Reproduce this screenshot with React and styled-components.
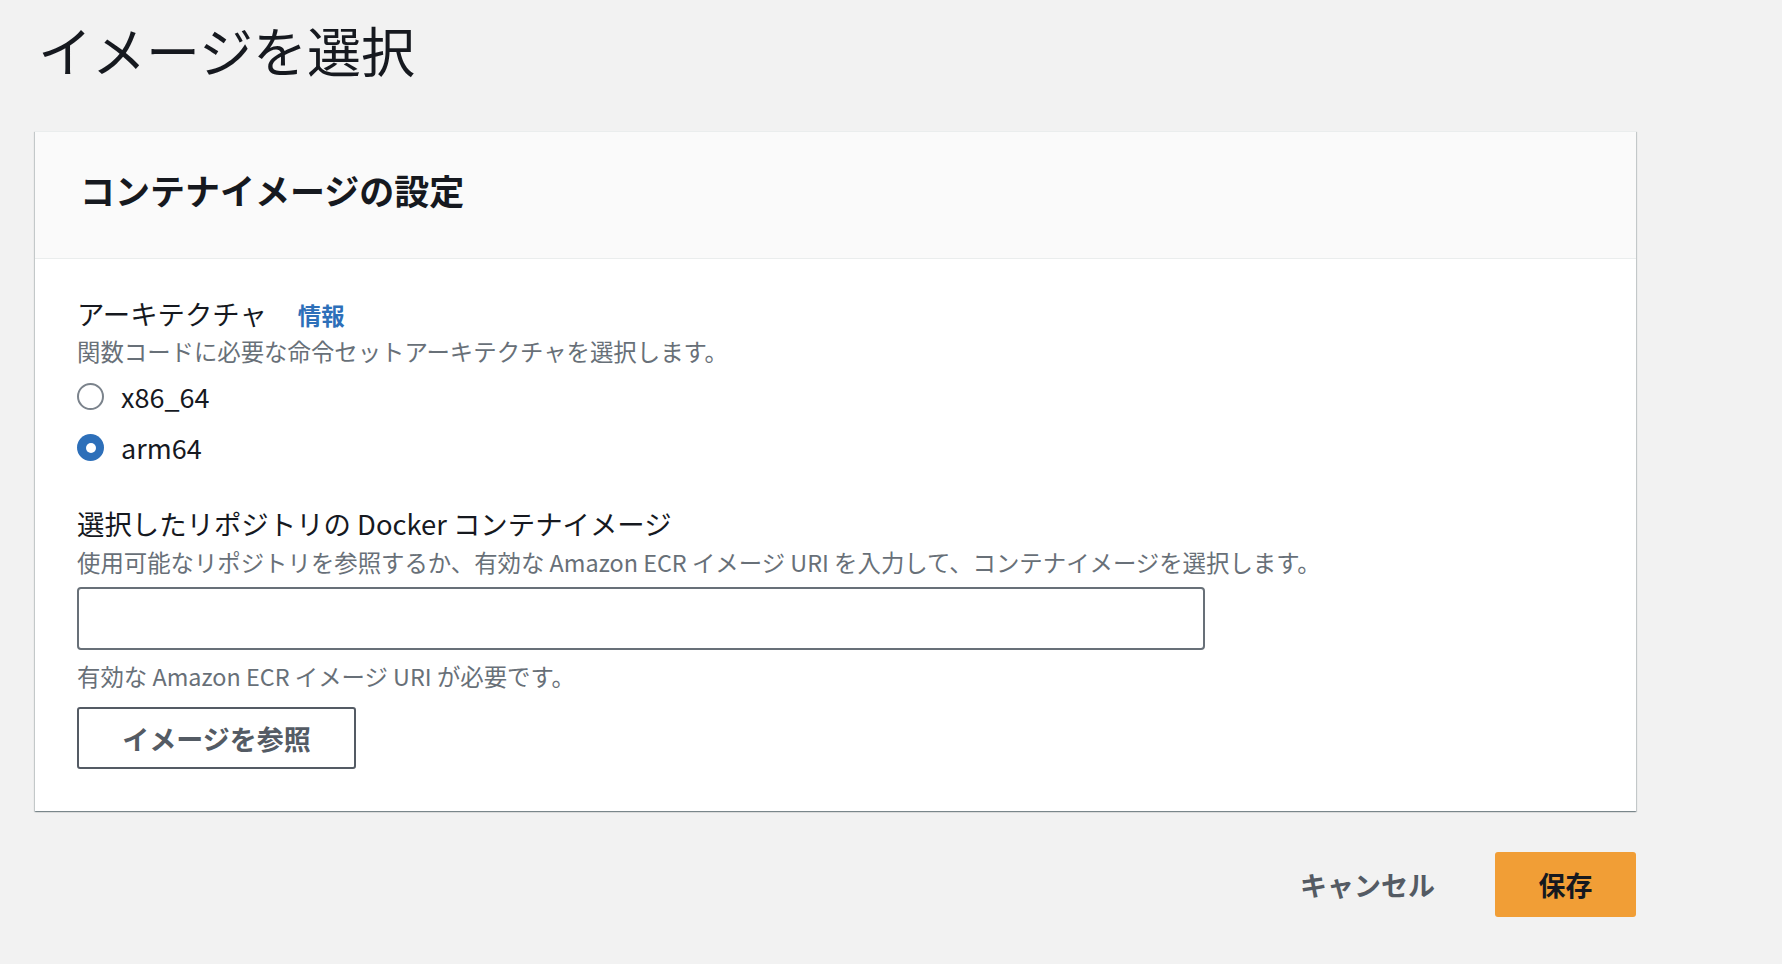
import React from "react";
import styled, { createGlobalStyle } from "styled-components";

const GlobalStyle = createGlobalStyle`
  html, body {
    margin: 0;
    padding: 0;
    background: #f2f2f2;
  }
  body {
    font-family: "Noto Sans CJK JP", "Noto Sans", "Liberation Sans", sans-serif;
    color: #16191f;
    min-height: 100vh;
  }
  * { box-sizing: border-box; }
`;

const Page = styled.div`
  width: 1601px;
  margin-left: 35px;
  padding-bottom: 40px;
`;

const Title = styled.h1`
  margin: 18px 0 49px 3px;
  font-size: 54px;
  line-height: 64px;
  font-weight: 400;
  color: #16191f;
`;

const Card = styled.section`
  background: #ffffff;
  border-top: 1px solid #eaeded;
  box-shadow: 0 1px 1px 0 rgba(0, 28, 36, 0.3), 1px 1px 1px 0 rgba(0, 28, 36, 0.15),
    -1px 1px 1px 0 rgba(0, 28, 36, 0.15);
`;

const CardHeader = styled.header`
  background: #fafafa;
  border-bottom: 1px solid #eaeded;
  padding: 38px 42px 48px;
`;

const CardTitle = styled.h2`
  margin: 0 0 0 3px;
  font-size: 35px;
  line-height: 40px;
  font-weight: 700;
  color: #16191f;
`;

const CardBody = styled.div`
  padding: 34px 42px 42px;
  display: flex;
  flex-direction: column;
  align-items: flex-start;
`;

const Field = styled.div`
  display: flex;
  flex-direction: column;
  align-items: flex-start;
  margin-top: ${(p) => p.$gap || 0}px;
`;

const LabelRow = styled.div`
  display: flex;
  align-items: baseline;
  gap: 31px;
  margin-bottom: 2px;
`;

const Label = styled.label`
  font-size: 27.4px;
  line-height: 40px;
  font-weight: 400;
  color: #16191f;
  margin-bottom: ${(p) => p.$mb || 0}px;
`;

const InfoLink = styled.a`
  font-size: 23.4px;
  font-weight: 700;
  color: #2d6fb9;
  text-decoration: none;
  cursor: pointer;
`;

const Description = styled.div`
  font-size: 23.4px;
  line-height: 32px;
  color: #687078;
`;

const RadioGroup = styled.div`
  display: flex;
  flex-direction: column;
  margin-top: 4px;
`;

const RadioRow = styled.label`
  display: flex;
  align-items: center;
  gap: 17px;
  height: 51px;
  cursor: pointer;
`;

const RadioCircle = styled.span`
  width: 27px;
  height: 27px;
  border-radius: 50%;
  display: flex;
  align-items: center;
  justify-content: center;
  border: ${(p) => (p.$checked ? "none" : "2px solid #7b838c")};
  background: ${(p) => (p.$checked ? "#2d6fb9" : "#ffffff")};
  &::after {
    content: "";
    display: ${(p) => (p.$checked ? "block" : "none")};
    width: 10px;
    height: 10px;
    border-radius: 50%;
    background: #ffffff;
  }
`;

const RadioText = styled.span`
  font-size: 27px;
  line-height: 40px;
  color: #16191f;
`;

const TextInput = styled.input`
  margin-top: 9px;
  width: 1128px;
  height: 63px;
  border: 2px solid #687078;
  border-radius: 4px;
  background: #ffffff;
  padding: 0 18px;
  font-family: inherit;
  font-size: 27px;
  color: #16191f;
  outline: none;
`;

const Constraint = styled(Description)`
  margin-top: 10px;
`;

const SecondaryButton = styled.button`
  margin-top: 15px;
  width: 279px;
  height: 62px;
  border: 2px solid #545b64;
  border-radius: 3px;
  background: #ffffff;
  font-family: inherit;
  font-size: 27px;
  font-weight: 700;
  color: #545b64;
  cursor: pointer;
`;

const Footer = styled.div`
  display: flex;
  justify-content: flex-end;
  align-items: center;
  gap: 30px;
  margin-top: 41px;
`;

const LinkButton = styled.button`
  border: none;
  background: transparent;
  padding: 0 30px;
  height: 65px;
  font-family: inherit;
  font-size: 27px;
  font-weight: 700;
  color: #545b64;
  cursor: pointer;
`;

const PrimaryButton = styled.button`
  width: 141px;
  height: 65px;
  border: none;
  border-radius: 3px;
  background: #f19e36;
  font-family: inherit;
  font-size: 27px;
  font-weight: 700;
  color: #16191f;
  cursor: pointer;
`;

const archs = [
  { id: "x86_64", checked: false },
  { id: "arm64", checked: true },
];

export default function App() {
  return (
    <>
      <GlobalStyle />
      <Page>
        <Title>イメージを選択</Title>
        <Card>
          <CardHeader>
            <CardTitle>コンテナイメージの設定</CardTitle>
          </CardHeader>
          <CardBody>
            <Field>
              <LabelRow>
                <Label>アーキテクチャ</Label>
                <InfoLink>情報</InfoLink>
              </LabelRow>
              <Description>関数コードに必要な命令セットアーキテクチャを選択します。</Description>
              <RadioGroup>
                {archs.map((a) => (
                  <RadioRow key={a.id}>
                    <RadioCircle $checked={a.checked} />
                    <RadioText>{a.id}</RadioText>
                  </RadioRow>
                ))}
              </RadioGroup>
            </Field>
            <Field $gap={30}>
              <Label $mb={3}>選択したリポジトリの Docker コンテナイメージ</Label>
              <Description>
                使用可能なリポジトリを参照するか、有効な Amazon ECR イメージ URI を入力して、コンテナイメージを選択します。
              </Description>
              <TextInput type="text" defaultValue="" aria-label="image uri" />
              <Constraint>有効な Amazon ECR イメージ URI が必要です。</Constraint>
              <SecondaryButton>イメージを参照</SecondaryButton>
            </Field>
          </CardBody>
        </Card>
        <Footer>
          <LinkButton>キャンセル</LinkButton>
          <PrimaryButton>保存</PrimaryButton>
        </Footer>
      </Page>
    </>
  );
}
